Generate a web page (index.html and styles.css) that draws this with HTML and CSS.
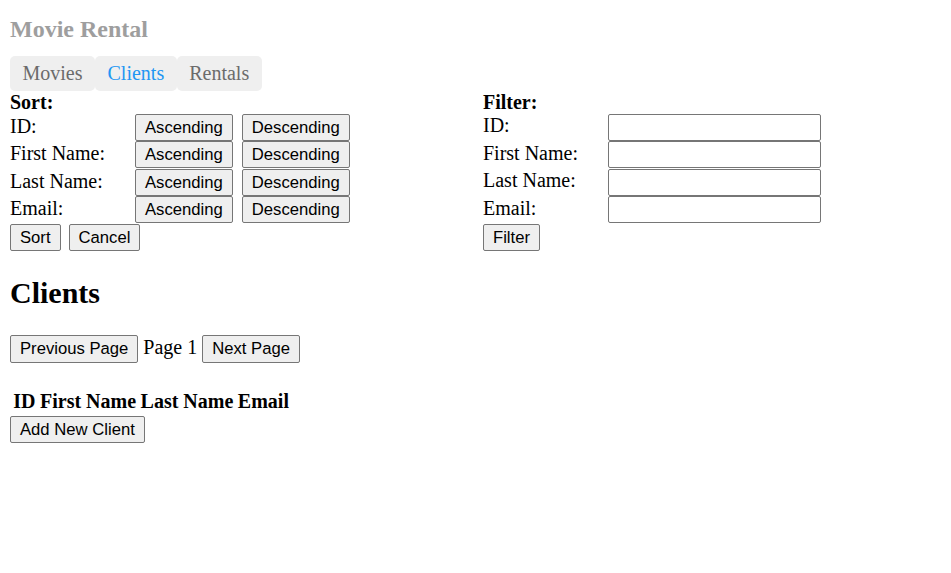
FILE: index.html
```html
<!DOCTYPE html>
<html>
<head>
<meta charset="utf-8">
<title>Movie Rental</title>
<link rel="stylesheet" href="styles.css">
</head>
<body>
<div class="app">
  <h1 class="brand">Movie Rental</h1>
  <nav class="tabs">
    <a class="tab">Movies</a>
    <a class="tab active">Clients</a>
    <a class="tab">Rentals</a>
  </nav>
  <div class="panels">
    <section class="panel">
      <div class="panel-title">Sort:</div>
      <div class="row"><span class="label">ID:</span><button class="btn">Ascending</button><button class="btn">Descending</button></div>
      <div class="row"><span class="label">First Name:</span><button class="btn">Ascending</button><button class="btn">Descending</button></div>
      <div class="row"><span class="label">Last Name:</span><button class="btn">Ascending</button><button class="btn">Descending</button></div>
      <div class="row"><span class="label">Email:</span><button class="btn">Ascending</button><button class="btn">Descending</button></div>
      <div class="actions"><button class="btn">Sort</button><button class="btn">Cancel</button></div>
    </section>
    <section class="panel">
      <div class="panel-title">Filter:</div>
      <div class="row"><span class="label">ID:</span><input class="field" type="text"></div>
      <div class="row"><span class="label">First Name:</span><input class="field" type="text"></div>
      <div class="row"><span class="label">Last Name:</span><input class="field" type="text"></div>
      <div class="row"><span class="label">Email:</span><input class="field" type="text"></div>
      <div class="actions"><button class="btn">Filter</button></div>
    </section>
  </div>
  <h2 class="heading">Clients</h2>
  <div class="pager"><button class="btn">Previous Page</button><span>Page 1</span><button class="btn">Next Page</button></div>
  <table class="grid">
    <thead>
      <tr><th>ID</th><th>First Name</th><th>Last Name</th><th>Email</th></tr>
    </thead>
  </table>
  <button class="btn">Add New Client</button>
</div>
</body>
</html>
```

FILE: styles.css
```css
html, body {
  margin: 0;
  padding: 0;
  background: #ffffff;
}

body {
  font-family: "Liberation Serif", "Times New Roman", serif;
  font-size: 20px;
  color: #000;
}

.app {
  padding: 0 10px;
}

.brand {
  margin: 0;
  padding-top: 16px;
  font-size: 24px;
  line-height: 27.5px;
  font-weight: bold;
  color: #9e9e9e;
}

.tabs {
  display: flex;
  margin-top: 12.5px;
}

.tab {
  display: block;
  background: #efefef;
  color: #6b6b6b;
  font-size: 20px;
  line-height: 23px;
  padding: 6px 12.5px 5.7px;
  border-radius: 5px;
  cursor: pointer;
}

.tab.active {
  color: #2196f3;
}

.panels {
  display: grid;
  grid-template-columns: 458px 1fr;
  column-gap: 15px;
  margin-top: 0;
}

.panel-title {
  font-weight: bold;
  line-height: 23px;
}

.row {
  display: flex;
  align-items: baseline;
  height: 27.5px;
}

.label {
  width: 125px;
  flex: none;
  line-height: 23px;
}

.row .btn + .btn {
  margin-left: 9px;
}

.actions {
  display: flex;
  align-items: baseline;
  gap: 8px;
}

.btn {
  font-family: "Liberation Sans", Arial, sans-serif;
  font-size: 16.67px;
  line-height: 19.2px;
  padding: 3px 9px 3px;
  margin: 0;
  border: 1px solid #767676;
  border-radius: 2px;
  background: #efefef;
  color: #000;
}

.field {
  box-sizing: border-box;
  width: 212.5px;
  height: 27px;
  margin: 0;
  border: 1px solid #767676;
  border-radius: 2px;
  background: #fff;
  font-family: "Liberation Sans", Arial, sans-serif;
  font-size: 16.67px;
  padding: 1px 2px;
}

.heading {
  margin: 25px 0 0;
  font-size: 30px;
  line-height: 34.5px;
  font-weight: bold;
}

.pager {
  display: flex;
  align-items: baseline;
  gap: 5px;
  margin: 25px 0 24px;
}

.grid {
  border-spacing: 2.5px;
  margin-left: 0;
}

.grid th {
  padding: 1.25px;
  line-height: 23px;
  font-weight: bold;
  text-align: center;
}
```
